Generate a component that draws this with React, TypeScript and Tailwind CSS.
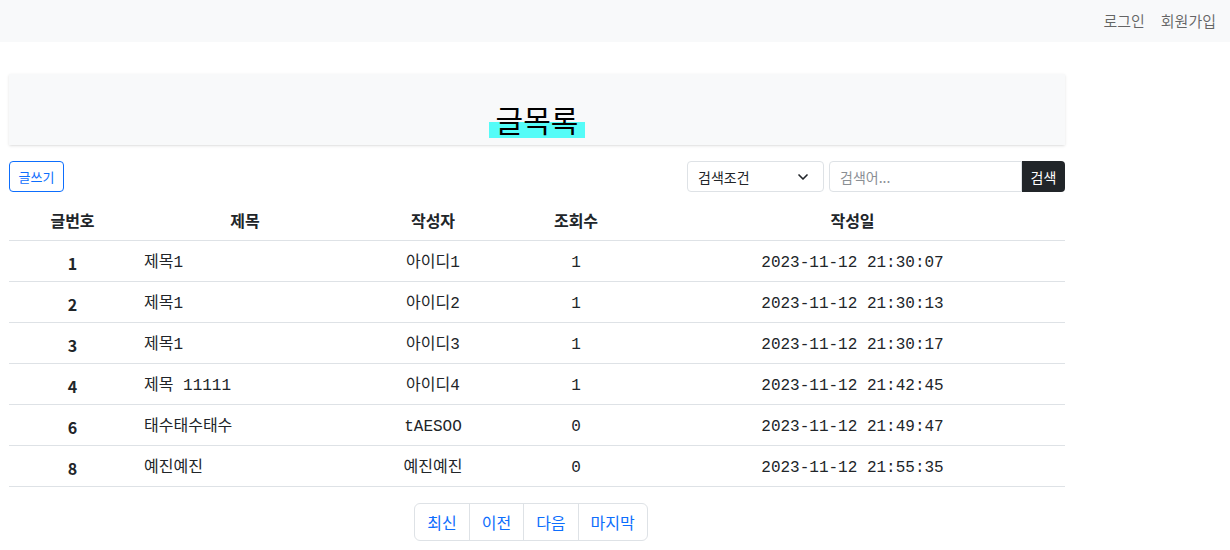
import { ChevronDown } from 'lucide-react'

const rows = [
  { no: 1, title: '제목1', writer: '아이디1', views: 1, date: '2023-11-12 21:30:07' },
  { no: 2, title: '제목1', writer: '아이디2', views: 1, date: '2023-11-12 21:30:13' },
  { no: 3, title: '제목1', writer: '아이디3', views: 1, date: '2023-11-12 21:30:17' },
  { no: 4, title: '제목 11111', writer: '아이디4', views: 1, date: '2023-11-12 21:42:45' },
  { no: 6, title: '태수태수태수', writer: 'tAESOO', views: 0, date: '2023-11-12 21:49:47' },
  { no: 8, title: '예진예진', writer: '예진예진', views: 0, date: '2023-11-12 21:55:35' },
]

const pages = ['최신', '이전', '다음', '마지막']

export default function App() {
  return (
    <div className="min-h-screen bg-white text-[#212529] font-['Noto_Sans_CJK_KR',sans-serif]">
      {/* Navbar */}
      <nav className="h-[42px] bg-[#f8f9fa] flex items-center justify-end pr-[6px]">
        <a className="px-2 text-[15px] text-black/60">로그인</a>
        <a className="px-2 text-[15px] text-black/60">회원가입</a>
      </nav>

      <main className="ml-[9px] w-[1056px] mt-[32px]">
        {/* Title */}
        <div className="h-[71px] bg-[#f8f9fa] shadow-sm flex justify-center">
          <h2 className="mt-[26px] h-[38px] leading-[38px] px-[7px] text-[30px] text-black bg-[linear-gradient(to_top,#55fcf8_42%,transparent_42%)]">
            글목록
          </h2>
        </div>

        {/* Toolbar */}
        <div className="mt-[16px] flex items-center justify-between h-[31px]">
          <button className="h-[31px] w-[55px] border border-[#0d6efd] rounded text-[13px] text-[#0d6efd] bg-white">
            글쓰기
          </button>
          <div className="flex items-center">
            <div className="h-[31px] w-[137px] border border-[#dee2e6] rounded flex items-center justify-between pl-[10px] pr-[12px] text-sm">
              <span>검색조건</span>
              <ChevronDown className="w-4 h-4" strokeWidth={2.5} />
            </div>
            <div className="ml-[5px] flex">
              <div className="h-[31px] w-[193px] border border-[#dee2e6] rounded-l flex items-center pl-[10px] text-sm text-[#8a8f94]">
                검색어...
              </div>
              <button className="h-[31px] w-[43px] bg-[#212529] text-white rounded-r text-sm">검색</button>
            </div>
          </div>
        </div>

        {/* Table */}
        <table className="mt-[8px] w-full table-fixed border-collapse text-base">
          <colgroup>
            <col className="w-[127px]" />
            <col className="w-[218px]" />
            <col className="w-[158px]" />
            <col className="w-[128px]" />
            <col />
          </colgroup>
          <thead>
            <tr className="border-b border-[#dee2e6]">
              <th className="py-2 leading-6 font-bold">글번호</th>
              <th className="py-2 leading-6 font-bold">제목</th>
              <th className="py-2 leading-6 font-bold">작성자</th>
              <th className="py-2 leading-6 font-bold">조회수</th>
              <th className="py-2 leading-6 font-bold">작성일</th>
            </tr>
          </thead>
          <tbody className="font-['Liberation_Mono','Noto_Sans_CJK_KR',monospace]">
            {rows.map((r) => (
              <tr key={r.no} className="border-b border-[#dee2e6]">
                <td className="pt-[10px] pb-[6px] leading-6 text-center font-bold font-['Noto_Sans_CJK_KR',sans-serif]">{r.no}</td>
                <td className="pt-[10px] pb-[6px] px-2 leading-6 text-left whitespace-pre">{r.title}</td>
                <td className="pt-[10px] pb-[6px] leading-6 text-center">{r.writer}</td>
                <td className="pt-[10px] pb-[6px] leading-6 text-center">{r.views}</td>
                <td className="pt-[10px] pb-[6px] leading-6 text-center">{r.date}</td>
              </tr>
            ))}
          </tbody>
        </table>

        {/* Pagination */}
        <div className="mt-[16px] flex justify-center pr-[12px]">
          <ul className="flex">
            {pages.map((p, i) => (
              <li
                key={p}
                className={
                  'h-[38px] flex items-center px-[12px] text-base text-[#0d6efd] border border-[#dee2e6] ' +
                  (i > 0 ? '-ml-px ' : '') +
                  (i === 0 ? 'rounded-l-md ' : '') +
                  (i === pages.length - 1 ? 'rounded-r-md' : '')
                }
              >
                {p}
              </li>
            ))}
          </ul>
        </div>
      </main>
    </div>
  )
}
